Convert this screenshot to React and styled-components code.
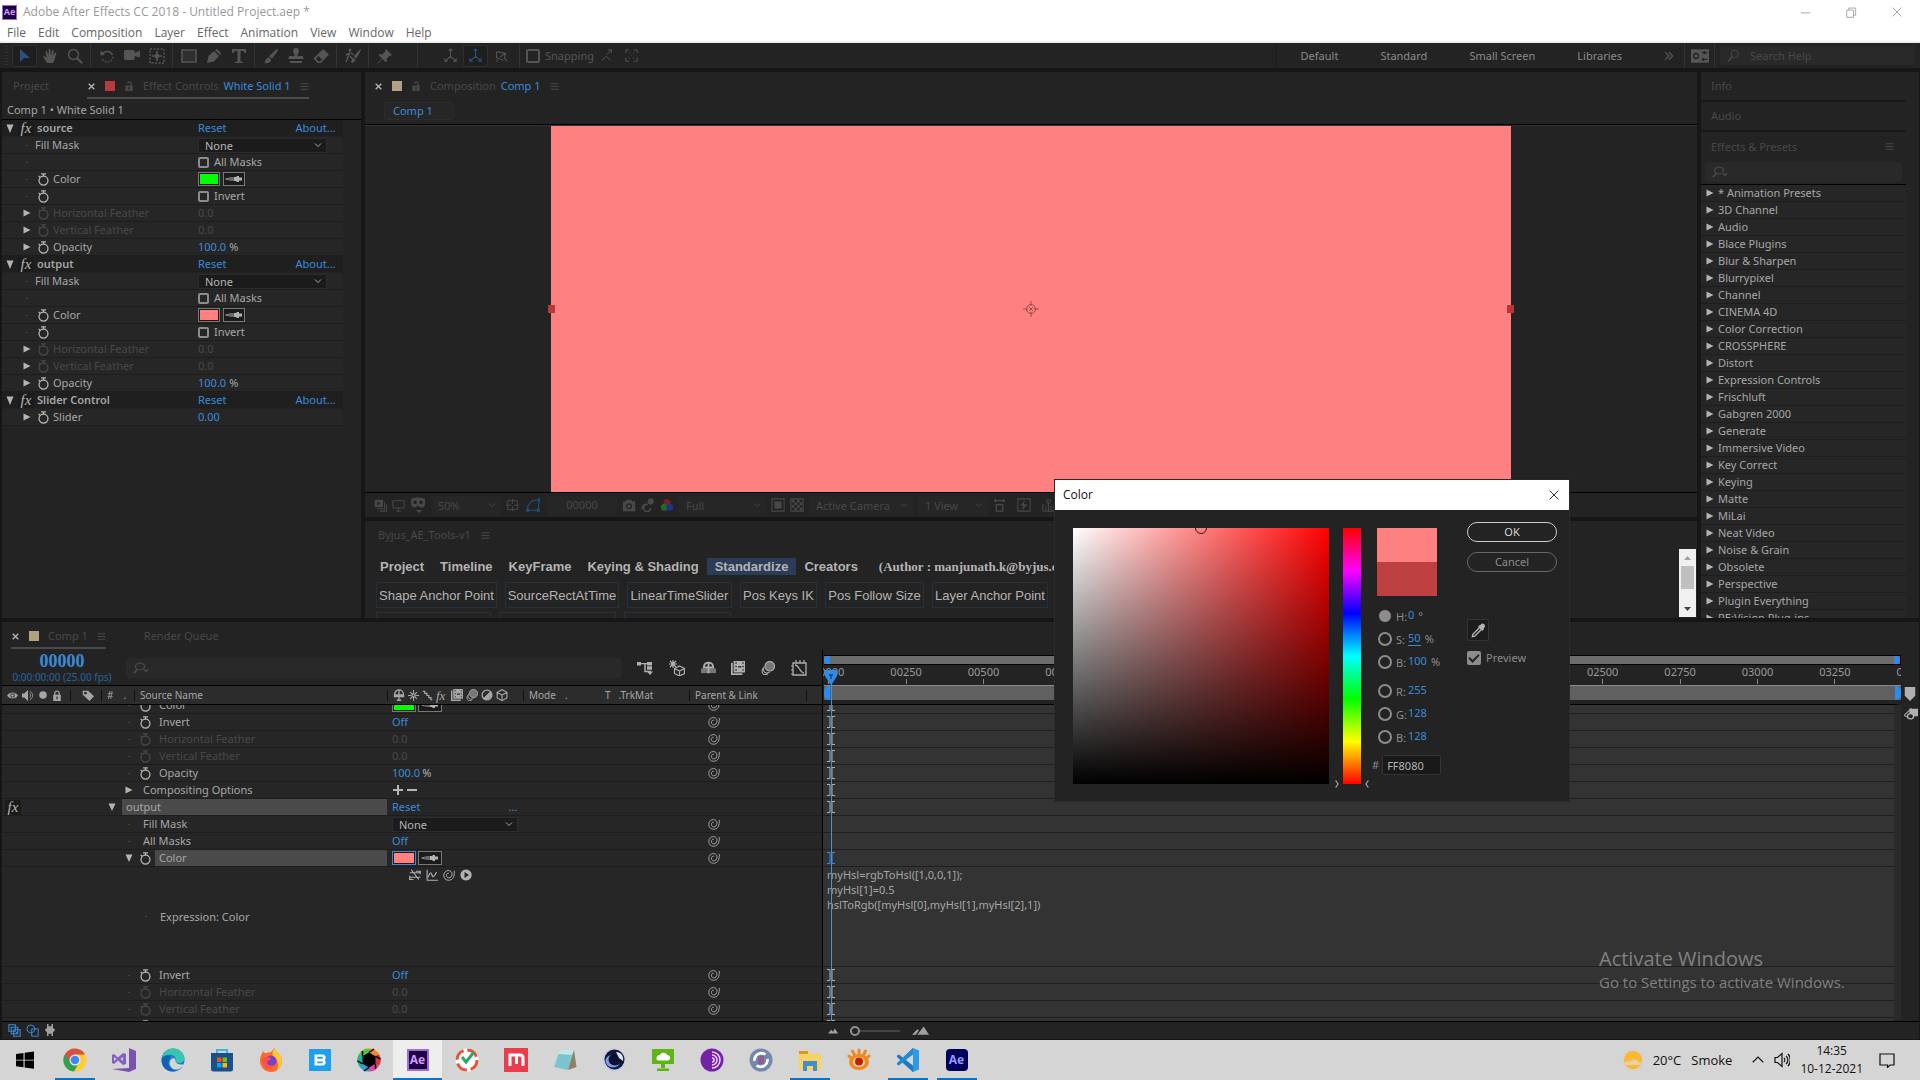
import React from "react";
import styled, { createGlobalStyle, css } from "styled-components";

const ui = `"Noto Sans", "Open Sans", sans-serif`;
const win = `"Open Sans", "Noto Sans", sans-serif`;
const C = {
  panel: "#232323",
  row: "#262626",
  gap: "#161616",
  line: "#1d1d1d",
  text: "#a6a6a6",
  dim: "#484848",
  blue: "#3b8ad8",
  salmon: "#ff8080",
};

const Global = createGlobalStyle`
  * { box-sizing: border-box; }
  body { margin: 0; background: ${C.gap}; color: ${C.text}; font: 11px/16px ${ui}; overflow: hidden; }
  button, input, select, textarea { font: inherit; color: inherit; margin: 0; padding: 0; border: 0; background: none; border-radius: 0; outline: none; text-align: left; }
  svg { display: block; flex: none; }
`;

/* ---------- icons ---------- */
const G = {
  arrow: <path d="M3 1v13l4-4h6z" fill="currentColor" stroke="none" />,
  hand: <path d="M5 15 1.5 9.5c-.8-1.4.6-2 1.5-1l1.6 1.6L3.6 4c-.2-1.300 1.200-1.600 1.600-.3l1.200 4L6.700 1.800c0-1.300 1.600-1.300 1.700 0l.4 5.700 1.300-5c.4-1.200 1.800-.8 1.600.4L10.900 8l1.900-3c.7-1 2-.3 1.500.8-1 2.200-1.300 6-3.300 9.200z" fill="currentColor" stroke="none" />,
  mag: <><circle cx="6.500" cy="6.500" r="5" /><path d="m10.200 10.200 5 5" strokeWidth="2" /></>,
  magL: <><circle cx="9.500" cy="6" r="4.500" /><path d="M6.300 9.500 1.500 15" strokeWidth="2" /></>,
  magDrop: <><circle cx="7" cy="6" r="4.500" strokeWidth="1.400" /><path d="M4.500 9.500 1 15" strokeWidth="2" /><path d="M10 10h6l-3 4z" fill="currentColor" stroke="none" /></>,
  rotate: <><path d="M3.500 5.500A6 6 0 0 1 13.500 7" /><path d="M1.500 2.500v4.700h4.700z" fill="currentColor" stroke="none" /><path d="M14 9a6 6 0 0 1-11.500 1" strokeDasharray="1.500 1.500" /></>,
  camera: <path d="M0 4c0-1.500.6-2 2-2h7c1.400 0 1.700.8 1.700 2v1L16 2.500v7L10.700 8v2c0 1.300-.6 2-1.700 2H2c-1.400 0-2-.7-2-2z" fill="currentColor" stroke="none" />,
  pan: <><rect x="1" y="1" width="14" height="14" strokeDasharray="2 1.500" /><circle cx="8" cy="8" r="1.500" fill="currentColor" /><path d="M8 3v3M8 10v3M3 8h3M10 8h3" strokeWidth="1.600" /></>,
  rect: <rect x="1" y="2" width="14" height="12" fill="#2e2e2e" />,
  pen: <path d="m1 15 1.500-7L8 3l5 5-5 5.500zM9 2l2-1 4 4-1 2z" fill="currentColor" stroke="none" />,
  type: <path d="M1 1h14v4h-1.500L12.500 3H9.500v10.500L12 14v1H4v-1l2.500-.5V3h-3L2.500 5H1z" fill="currentColor" stroke="none" />,
  brush: <path d="M15 1c1 1-4 7-6 9.500L6 8.500C8 6 14 0 15 1zM5.500 9.500 8 11.500C8 15 4 15.500 1 15c2-1 1.500-5.500 4.500-5.500z" fill="currentColor" stroke="none" />,
  stamp: <path d="M8 0c2 0 3 1.500 3 3S9.500 6 9.500 8H14c1.500 0 1.500 3 1.500 3H.5S.5 8 2 8h4.500C6.500 6 5 4.500 5 3s1-3 3-3zM2 13h12v2H2z" fill="currentColor" stroke="none" />,
  eraser: <path d="M10 1 16 6.500 8 15H4.500L.5 10.500zM3 10.500l2.500 3H7l2-2-3.500-3.500z" fill="currentColor" stroke="none" fillRule="evenodd" />,
  roto: <><circle cx="5" cy="2" r="1.500" fill="currentColor" stroke="none" /><path d="M5 4 3 9l-2 5M5 8l2.500 3v4M5 5 1 7M6 5l3 2" /><path d="M16 1C14 2 10 6 9 9l2 1.500C13 8 16 3 16 1zM8.500 10c-1.500.5-1 3-3 4 3 .500 5-.5 5-2.500z" fill="currentColor" stroke="none" /></>,
  pin: <path d="m9 1 6 6-1.500 1-1-.3L9.500 11l.5 2.500-1 1L5.500 11 1 15.500.5 15 5 10.500 1.500 7l1-1 2.500.5L8.300 3.500 8 2z" fill="currentColor" stroke="none" />,
  axes: <path d="M8 1v8L2 14M8 9l6 5M6 3l2-2 2 2M2 11v3h3M14 11v3h-3" />,
  axesView: <path d="m3 15 1-3M3 3l10 2-1 5 3 4M3 3v7l8 3M13 5 7 9" />,
  snapA: <path d="m2 14 6-5 5 5M8 7l6-6M10 1h4v4" />,
  dotsBox: <path d="M1 5V1h4M11 1h4v4M15 11v4h-4M5 15H1v-4M5 5h1M10 5h1M8 8h.5M5 11h1M10 11h1" />,
  lock: <path d="M2 7h8.500V4.500c0-2-3.500-2-3.500-.5H5c0-5 7.500-4.500 7.500.5V7H14v9H2zm5 2.500v4h2v-4z" fill="currentColor" fillRule="evenodd" stroke="none" />,
  lockC: <path d="M2 7h1.500V4.500C3.500-.5 12.500-.5 12.500 4.500V7H14v9H2zm3.500 0h5V4.500c0-2.500-5-2.500-5 0zM7 9.500v4h2v-4z" fill="currentColor" fillRule="evenodd" stroke="none" />,
  menu: <path d="M1 3h14M1 8h14M1 13h14" strokeWidth="1.800" />,
  x: <path d="m3 3 10 10M13 3 3 13" strokeWidth="2.400" />,
  thinx: <path d="m1 1 14 14M15 1 1 15" strokeWidth="1.400" />,
  watch: <><circle cx="8" cy="9.300" r="5.500" strokeWidth="1.600" /><path d="M5 1h6M8 1v3M2 3.500l2 2" strokeWidth="1.600" /></>,
  whip: <path d="M15 2.500v3c0 6-3 9.500-7.500 9.500C3.500 15 1 12.200 1 8.500 1 4.500 4 2 7.300 2c2.700 0 4.700 2 4.700 5 0 3-2 4.800-4.300 4.800S4.500 10 4.500 8.300 6 5.500 7.800 5.500" strokeWidth="1.300" />,
  triR: <path d="M1 1v14l14-7z" fill="currentColor" stroke="none" />,
  triD: <path d="M1 1h14L8 16z" fill="currentColor" stroke="none" />,
  chev: <path d="m2 5 6 6 6-6" strokeWidth="1.800" />,
  chevUp: <path d="m1 11 7-7 7 7" strokeWidth="1.500" />,
  more: <path d="m2 2 6 6-6 6M8 2l6 6-6 6" strokeWidth="2" />,
  settings: <><rect x="0" y="2" width="16" height="12" fill="currentColor" stroke="none" /><path d="M9.500 5h5M9.500 11h5M12 3.500v3M11 9.500v3" stroke="#232323" /><circle cx="4.500" cy="8" r="2.200" stroke="#232323" /></>,
  eye: <path d="M.5 8C3 3 13 3 15.500 8 13 13 3 13 .5 8zM8 4.500a3.500 3.500 0 1 0 .1 0zM8 6.500a1.500 1.500 0 1 1-.1 0z" fill="currentColor" fillRule="evenodd" strokeWidth=".8" />,
  speaker: <><path d="M0 5h3l5-5v16l-5-5H0z" fill="currentColor" stroke="none" /><path d="M10 5c2 1.500 2 4.500 0 6M10.500 2c5 3 5 9 0 12" /></>,
  dot: <circle cx="8" cy="8" r="6" fill="currentColor" stroke="none" />,
  tag: <path d="M1 1h7l8 8-6 7-9-9zM4.500 2.500a2 2 0 1 0 .1 0z" fill="currentColor" fillRule="evenodd" stroke="none" />,
  shy: <path d="M2 8c0-9 12-9 12 0zM1 10h14M8 1v14M5 15h6" strokeWidth="1.800" />,
  sun: <path d="M8 0v5M8 11v5M0 8h5M11 8h5M3 3l3 3M10 10l3 3M13 3l-3 3M6 10l-3 3M6 6h4v4H6z" strokeWidth="1.500" />,
  slash: <path d="M1 2h3v3h3v3h3v3h3v3h2" strokeWidth="1.800" />,
  film: <path d="M0 2h2v12h11v2H0zM3 0h13v13H3zm2 1.500v1.500h1.500V1.500zm0 4V7h1.500V5.500zm0 4V11h1.500V9.500zm8-8V3h1.500V1.500zm0 4V7h1.500V5.500zm0 4V11h1.500V9.500zM8 6v1.500h4V6z" fill="currentColor" fillRule="evenodd" stroke="none" />,
  blur: <><circle cx="10" cy="6" r="5.500" fill="#777" /><path d="M3.500 6.500C1 13 6 15 10 12.500M2 8.500C-.5 14.500 4 17 8 14.500" /></>,
  adj: <><circle cx="8" cy="8" r="6.500" strokeWidth="1.800" /><path d="M12.500 3.500a6.500 6.500 0 0 1-9 9z" fill="currentColor" /></>,
  cube: <path d="m8 1 6.500 3.500v7.500L8 15.500 1.500 12V4.500zM1.500 4.500 8 8l6.500-3.500M8 8v7.500" strokeWidth="1.500" />,
  flow: <><path d="M0 3h15M8 3v9h6" strokeWidth="1.500" /><path d="M0 1h4v4H0zM10 1h5v4h-5zM10 6h5v4h-5zM10 12h6l-3 4z" fill="currentColor" stroke="none" /></>,
  draft: <><path d="m10.500 6 5 2.500v5l-5 2.500-5-2.500v-5zM5.500 8.500l5 2.500 5-2.500M10.500 11v5" /><path d="M4 0v8M0 4h8M1 1l6 6M7 1 1 7" /></>,
  shyBig: <><path d="M0 9h16v5H0z" fill="#777" stroke="none" /><path d="M3 8c0-7 10-7 10 0zM8 3v11" strokeWidth="2" /></>,
  graph: <><path d="M2 3h13v12H2zM4 5c4 0 5 8 9 8" strokeWidth="1.300" /><path d="M5 0v3M9 0v3M13 0v3M0 6h2M0 10h2M0 14h2" /></>,
  exprOff: <path d="M1 5h14M1 11h14M3 1l10 13M9 3h6v4M1 9v5h5" strokeWidth="1.600" />,
  exprGraph: <path d="M1.500 1v14H16M3 11c2-7 4-7 5-3s3 3 6-4" strokeWidth="1.500" />,
  exprPlay: <path d="M8 .5a7.500 7.500 0 1 0 .1 0zM6 4l6 4-6 4z" fill="currentColor" fillRule="evenodd" stroke="none" />,
  squares: <path d="M1 1h8v8H1zM4 4h8v8H4zM7 7h8v8H7zM11 9.500v3M9.500 11h3" strokeWidth="1.300" />,
  circSq: <><circle cx="6" cy="6" r="4.800" /><path d="M7 6h8v9H7z" /></>,
  brackets: <path d="M4 0h2v16H4v-5L1 8l3-3zM12 0h-2v16h2v-5l3-3-3-3zM6 3h4v10H6z" fill="currentColor" stroke="none" />,
  mtn: <path d="m0 12 5-6 3 3 3-5 5 8z" fill="currentColor" stroke="none" />,
  mtn2: <path d="m0 14 5-8 1.500 2L3.500 14zM5 14 11 2l5 12z" fill="currentColor" stroke="none" />,
  marker: <path d="M1 0h14v10l-7 6-7-6z" fill="currentColor" stroke="none" />,
  compBtn: <><path d="M6 1h10v10H6z" fill="currentColor" stroke="none" /><path d="m0 10 8-9v13z" /><circle cx="7.500" cy="11" r="3.500" fill="#232323" strokeWidth="1.600" /></>,
  layers: <><path d="M1 1h10v9H1z" fill="currentColor" stroke="none" /><path d="M13 4v8H4M15.500 7v8H7" strokeWidth="1.400" /><path d="m4 3 4 2.500L4 8z" fill="#232323" stroke="none" /></>,
  monitor: <path d="M1 2h14v9H1zM8 11v4M5 15h6" />,
  mask: <path d="M1 2c4-2 10-2 14 0v5c0 4-5 5-7 1-2 4-7 3-7-1zM5 3.500a1.800 1.800 0 1 0 .1 0zM11 3.500a1.800 1.800 0 1 0 .1 0zM6 13h6l-3 3z" fill="currentColor" fillRule="evenodd" stroke="none" />,
  grid: <path d="M2 2h12v11H2zM8 0v6M8 9v6M0 7.500h6M10 7.500h6" />,
  path: <path d="M2 14V9l5-6 8-1-1 12zM1 13h2v2H1zM13 13h2v2h-2zM14 1h2v2h-2z" />,
  photo: <path d="M1 4h3l1.500-2h5L12 4h3v11H1zm7 2a3.500 3.500 0 1 0 .1 0zm0 1.500a2 2 0 1 1-.1 0z" fill="currentColor" fillRule="evenodd" stroke="none" />,
  person: <><circle cx="11" cy="4" r="3" fill="currentColor" /><path d="M8 7.500a4 4 0 1 0 3 4M1 13c0-4 2-6 6-6" strokeWidth="1.800" /></>,
  rgb: <g stroke="none"><circle cx="8" cy="5" r="4" fill="#7a2020" /><circle cx="5" cy="10.500" r="4" fill="#1f6a25" /><circle cx="11" cy="10.500" r="4" fill="#22308a" /></g>,
  safe: <><path d="M1 1h14v14H1z" /><path d="M4.500 4.500h7v7h-7z" fill="currentColor" /></>,
  checker: <><path d="M1 1h14v14H1z" /><path d="M2 2h3v3H2zM8 2h3v3H8zM5 5h3v3H5zM11 5h3v3h-3zM2 8h3v3H2zM8 8h3v3H8zM5 11h3v3H5zM11 11h3v3h-3z" fill="currentColor" stroke="none" /></>,
  par: <path d="M1 2h14M3 0v4M13 0v4M4 7h8v8H4z" strokeWidth="1.600" />,
  fast: <><path d="M1 1h14v14H1z" /><path d="m9 2-5 7h3l-1 5 6-7H8z" fill="currentColor" stroke="none" /></>,
  tl: <path d="M1 6v9h14V6M5 15V8M11 15V8M8 15V4M6 1h4v4H6z" />,
  dropper: <><path d="m10 2 1-1c2-1.500 5 1 3.500 3.500l-1 1 .5 1-2 2L7.500 4l2-2z" fill="currentColor" stroke="none" /><path d="m9 5-7 7-.5 2.500L4 14l7-7" strokeWidth="1.500" /></>,
  min: <path d="M1 8.500h14" />,
  restore: <path d="M1 4.500h10V15H1zM4 4V1.500h10V12h-3" />,
  note: <path d="M1 2h14v11h-4l-2.500 2.500V13H1z" />,
  vol: <path d="M1 5.500h2.500L8 1.500v13l-4.500-4H1zM10 6c1 1 1 3 0 4M12 4c2.500 2 2.500 6 0 8M14 2c3 3 3 9 0 12" />,
  hueL: <path d="m2 1 8 7-8 7" strokeWidth="3" />,
  hueR: <path d="m14 1-8 7 8 7" strokeWidth="3" />,
};
const Icon = ({ n, s = 12, w, sw = 1.2 }) => (
  <svg width={w || s} height={s} viewBox="0 0 16 16" preserveAspectRatio="none" fill="none" stroke="currentColor" strokeWidth={sw} aria-hidden="true">{G[n]}</svg>
);
const Dropper = () => (
  <svg width="18" height="8" viewBox="0 0 18 8" aria-hidden="true">
    <path d="M0 4c2-1.500 5-1.500 9-1.500V2h2.500V1H14v1.500h3v3h-3V7h-2.500V6H9v-.5C5 5.500 2 5.500 0 4z" fill="#b4b4b4" />
    <path d="M2.500 4H9" stroke="#1b1b1b" />
  </svg>
);

/* ---------- shared parts ---------- */
const Shell = styled.div`display: flex; flex-direction: column; height: 100vh; min-height: 900px;`;
const Panel = styled.section`background: ${C.panel}; min-width: 0; min-height: 0; display: flex; flex-direction: column; overflow: hidden;`;
const Btn = styled.button`display: inline-flex; align-items: center; gap: 5px; white-space: nowrap; color: ${(p) => p.$c || "inherit"};`;
const Link = styled.button`color: ${C.blue}; white-space: nowrap;`;
const Chip = styled.span`width: 10px; height: 10px; background: ${(p) => p.$c};`;
const Blue = styled.span`color: ${C.blue};`;
const Fx = styled.span`font: italic 15px/15px "Liberation Serif", serif; color: #b4b4b4; width: 16px; text-align: center; background: #1b1b1b;`;
const Selector = styled.label`
  display: grid; align-items: center; width: ${(p) => p.$w}px; height: ${(p) => p.$h || 15}px; background: ${(p) => p.$bg || "#1b1b1b"};
  border: 1px solid ${(p) => p.$bd || "#2c2c2c"}; color: ${(p) => p.$c || "#b4b4b4"};
  > * { grid-area: 1 / 1; }
  > svg { justify-self: end; margin-right: 4px; }
`;
const Native = styled.select`appearance: none; width: 100%; padding-left: 6px; line-height: 13px;`;
const Select = ({ value, label, ...p }) => (
  <Selector {...p}><Native aria-label={label} defaultValue={value}><option>{value}</option></Native><Icon n="chev" s={8} /></Selector>
);
const FootSelect = (p) => <Select $h={19} $bg="#262626" $bd="#262626" $c={C.dim} {...p} />;
const Tick = styled.input.attrs({ type: "checkbox" })`
  appearance: none; width: ${(p) => p.$s || 11}px; height: ${(p) => p.$s || 11}px; border: 2px solid ${(p) => p.$c || "#8c8c8c"}; border-radius: 2px; flex: none;
`;
const TickLabel = styled.label`display: inline-flex; align-items: center; gap: 5px;`;
const Gap = styled.span`flex: none; width: ${(p) => p.$w}px;`;
const Tint = styled.span`color: ${(p) => p.$c}; padding: ${(p) => p.$p || 0}px;`;

/* ---------- window chrome ---------- */
const TitleBar = styled.header`background: #fff; height: 43px; flex: none; border-bottom: 2px solid #eef0ee; font: 12px/20px ${win}; color: #999;`;
const TitleRow = styled.div`display: flex; align-items: center; height: 24px; padding-left: 2px; gap: 6px;`;
const Badge = styled.span`width: 15px; height: 15px; background: #22003d; border: 1px solid #9a6bd0; color: #c79bff; font: bold 9px/12px ${ui}; text-align: center;`;
const WinBtns = styled.div`margin-left: auto; display: flex; button { width: 46px; justify-content: center; height: 20px; }`;
const Menus = styled.nav`display: flex; height: 17px; padding-left: 7px; gap: 12px; line-height: 17px; color: #666;`;

const ToolBar = styled.div`background: ${C.panel}; height: 25px; flex: none; display: flex; align-items: center; padding: 0 5px; color: #555; margin-bottom: 4px;`;
const Grip = styled.span`width: 7px; height: 19px; background: repeating-linear-gradient(#333 0 1px, transparent 1px 3px); background-size: 3px 100%; background-repeat: no-repeat;`;
const Tool = styled.button`
  width: 25px; height: 22px; display: flex; align-items: center; justify-content: center; border-radius: 2px;
  ${(p) => p.$on && css`background: #1e1e1e; border: 1px solid #2e2e2e; color: #2b527c;`}
`;
const Sep = styled.span`width: 1px; height: 25px; margin: 0 ${(p) => p.$m ?? 3}px; background: #333; flex: none;`;
const Spaces = styled.nav`margin-left: auto; display: flex; align-items: center; color: #8a8a8a; gap: 42px; padding: 0 4px 0 24px; border-left: 1px solid #1b1b1b; height: 25px;`;
const SearchBox = styled.label`display: flex; align-items: center; gap: 10px; background: #292929; border-radius: 3px; color: #484848; height: ${(p) => p.$h || 19}px; padding: 0 7px; ${(p) => p.$w && `width: ${p.$w}px;`} input { flex: 1; min-width: 0; } input::placeholder { color: #484848; opacity: 1; }`;

/* ---------- upper workspace ---------- */
const Work = styled.main`flex: 1; min-height: 0; display: flex; flex-direction: column; gap: 4px;`;
const Upper = styled.div`flex: 547 1 0; min-height: 0; display: grid; grid-template-columns: 359px minmax(0, 1fr) 218px; gap: 4px; padding: 0 1px 0 2px;`;
const Middle = styled.div`display: flex; flex-direction: column; gap: 4px; min-height: 0; min-width: 0;`;
const Tabs = styled.div`display: flex; align-items: center; height: 28px; flex: none; padding-left: ${(p) => p.$l}px; gap: ${(p) => p.$g || 0}px; color: ${C.dim};`;
const ActiveTab = styled.div`display: flex; align-items: center; gap: ${(p) => p.$g || 9}px; height: 26px; padding-top: ${(p) => (p.$u ? 2 : 0)}px; ${(p) => p.$u && "border-bottom: 2px solid #4a4a4a;"}`;
const Crumb = styled.div`height: 20px; line-height: 20px; padding-left: 5px; border-bottom: 1px solid #000; flex: none;`;

const FxRow = styled.div`
  display: flex; align-items: center; height: 17px; width: 341px; background: ${(p) => (p.$head ? "#1f1f1f" : C.row)};
  border-bottom: 1px solid ${(p) => (p.$head ? "#222" : C.line)}; color: ${(p) => (p.$off ? C.dim : C.text)};
`;
const FxName = styled.div`display: flex; align-items: center; width: 196px; padding-left: ${(p) => (p.$in ? 17 : 0)}px;`;
const FxTitle = styled.span`font-weight: 600; margin-left: 3px;`;
const FxText = styled.span`margin-left: ${(p) => (p.$w ? 2 : 0)}px;`;
const Slot = styled.span`width: ${(p) => p.$w || 16}px; display: flex; justify-content: center; flex: none; color: ${(p) => p.$c || "inherit"};`;
const Speck = styled.span`width: 2px; height: 1px; background: #444;`;
const Value = styled.div`display: flex; align-items: center; flex: 1; gap: ${(p) => p.$g ?? 3}px;`;
const Swatch = styled.button`width: ${(p) => p.$w || 22}px; height: 14px; background: ${(p) => p.$fill}; border: 1px solid ${(p) => p.$bd || "#777"}; box-shadow: inset 0 0 0 1px #1b1b1b;`;
const DropBtn = styled.button`width: ${(p) => p.$w || 22}px; height: 14px; border: 1px solid #777; background: #1b1b1b; display: flex; align-items: center; justify-content: center;`;

const Effect = ({ name, children }) => (
  <>
    <FxRow $head>
      <FxName><Slot $c="#b4b4b4"><Icon n="triD" s={9} w={8} /></Slot><Fx>fx</Fx><FxTitle>{name}</FxTitle></FxName>
      <Value $g={69}><Link>Reset</Link><Link>About...</Link></Value>
    </FxRow>
    {children}
  </>
);
const Prop = ({ name, tri, watch = true, off, children }) => (
  <FxRow $off={off}>
    <FxName $in>
      <Slot $c="#b4b4b4">{tri ? <Icon n="triR" s={8} /> : <Speck />}</Slot>
      {watch && <Slot $c={off ? "#484848" : "#b4b4b4"}><Icon n="watch" s={13} /></Slot>}
      <FxText $w={watch}>{name}</FxText>
    </FxName>
    <Value>{children}</Value>
  </FxRow>
);

const ChromaProps = ({ color }) => (
  <>
    <Prop name="Fill Mask" watch={false}><Select $w={129} value="None" label="Fill Mask" /></Prop>
    <Prop name="" watch={false}><TickLabel><Tick />All Masks</TickLabel></Prop>
    <Prop name="Color"><Swatch $fill={color} aria-label="Color" /><DropBtn aria-label="Pick color"><Dropper /></DropBtn></Prop>
    <Prop name=""><TickLabel><Tick />Invert</TickLabel></Prop>
    <Prop name="Horizontal Feather" tri off>0.0</Prop>
    <Prop name="Vertical Feather" tri off>0.0</Prop>
    <Prop name="Opacity" tri><Link>100.0</Link>%</Prop>
  </>
);

const CompPanel = styled(Panel)`flex: 1;`;
const CompHead = styled.div`height: 25px; flex: none; border-bottom: 1px solid #000; padding: 2px 19px 0;`;
const CompTab = styled.button`width: 70px; height: 18px; background: #262626; border: 1px solid #2c2c2c; border-radius: 2px; color: ${C.blue}; padding-left: 8px; display: block;`;
const Viewport = styled.div`flex: 1; min-height: 0; display: flex; justify-content: center; border-bottom: 1px solid #000; border-top: 1px solid #333;`;
const Frame = styled.div`flex: 0 0 72%; background: ${C.salmon}; position: relative; display: grid; place-items: center; color: #9a4a4a;`;
const Handle = styled.span`position: absolute; top: calc(50% - 4px); ${(p) => p.$side}: -3px; width: 7px; height: 8px; background: #b83838;`;
const CompFoot = styled.div`height: 24px; flex: none; display: flex; align-items: center; gap: 5px; padding-left: 9px; color: #484848; white-space: nowrap;`;
const TimeBox = styled.button`width: 70px; height: 19px; background: #262626; text-align: center;`;

const ToolsPanel = styled(Panel)`height: 97px; flex: none;`;
const ToolsBody = styled.div`flex: 1; display: flex; min-height: 0; margin-right: 1px;`;
const ToolsMain = styled.div`flex: 1; min-width: 0; padding: 9px 11px 0; font-family: "Liberation Sans", Arial, sans-serif; overflow: hidden;`;
const CatRow = styled.div`display: flex; align-items: center; font-weight: bold; font-size: 13px; line-height: 17px; color: #b4b4b4; white-space: nowrap;`;
const Cat = styled.button`font-weight: bold; padding: 0 8px; margin-left: ${(p) => (p.$first ? -4 : 0)}px; ${(p) => p.$on && "background: #2a3c58;"}`;
const Author = styled.span`font-family: "Liberation Serif", serif; margin-left: 13px;`;
const ActRow = styled.div`display: flex; gap: 8px; margin-top: ${(p) => p.$t}px; font-size: 13px; line-height: 15px; color: #b4b4b4;`;
const Act = styled.button`height: 26px; border: 1px solid #24303c; text-align: center; white-space: nowrap; flex: none; width: ${(p) => p.$w}px;`;
const Scroll = styled.div`width: 17px; height: 68px; background: #f0f0f0; display: flex; flex-direction: column; align-items: center; justify-content: space-between; color: #8a8a8a;`;
const ScrollBtn = styled.button`height: 17px; width: 17px; display: grid; place-items: center; color: ${(p) => p.$c};`;
const Thumb = styled.span`width: 13px; height: 23px; background: #c0c0c0; margin-bottom: 11px;`;

const SideHead = styled.div`height: ${(p) => (p.$b ? 30 : 29)}px; flex: none; padding: 0 12px 0 10px; display: flex; align-items: center; justify-content: space-between; color: ${C.dim}; margin-right: 13px; ${(p) => p.$b && "border-bottom: 2px solid #181818;"}`;
const SideSearch = styled.div`margin: 0 13px 0 0; padding: 1px 4px 2px; border-bottom: 1px solid #000; flex: none;`;
const FxList = styled.ul`list-style: none; margin: 0 13px 0 0; padding: 0; min-height: 0; overflow: hidden;`;
const FxItem = styled.li`height: 17px; background: ${C.row}; border-bottom: 1px solid ${C.line}; display: flex; align-items: center; gap: 4px; padding-left: 5px; color: #b4b4b4; white-space: nowrap;`;
const FxItemText = styled.button`color: ${C.text};`;

/* ---------- timeline ---------- */
const Time = styled(Panel)`flex: 417 1 0; margin: 0 1px 0 2px; border-bottom: 1px solid #161616;`;
const TimeCols = styled.div`flex: 1; min-height: 0; display: grid; grid-template-columns: 821px minmax(0, 1fr) 18px;`;
const Left = styled.div`display: flex; flex-direction: column; min-height: 0; border-right: 1px solid #000;`;
const Top = styled.div`height: 35px; flex: none; display: flex; align-items: center; padding-left: 8px;`;
const Clock = styled.div`width: 104px; text-align: center; color: #2463a0; font-size: 10px; line-height: 14px; padding-top: 1px; white-space: nowrap;`;
const Frames = styled.button`font: bold 18px/18px "Liberation Serif", serif; color: ${C.blue}; display: block; margin: 0 auto;`;
const SwitchRow = styled.div`display: flex; align-items: center; flex: 1; justify-content: space-between; padding: 0 15px 0 16px; color: #b0b0b0;`;
const Heads = styled.div`height: 20px; flex: none; display: flex; align-items: center; background: #2c2c2c; border-top: 1px solid #000; border-bottom: 1px solid #000; color: ${C.text}; font-size: 10px;`;
const Head = styled.div`width: ${(p) => p.$w}px; height: 11px; flex: none; display: flex; align-items: center; gap: ${(p) => p.$g || 4}px; padding-left: 5px; ${(p) => p.$b && "border-left: 1px solid #111;"}`;
const SmallFx = styled.span`font: italic 13px/11px "Liberation Serif", serif; width: 12px;`;
const Clip = styled.div`flex: 1; min-height: 0; overflow: hidden;`;
const Rows = styled.div`margin-top: -8px;`;
const TRow = styled.div`display: flex; align-items: center; height: ${(p) => p.$h || 17}px; background: ${C.row}; border-bottom: 1px solid ${C.line}; color: ${(p) => (p.$off ? C.dim : C.text)}; ${(p) => p.$h && "align-items: stretch;"}`;
const TName = styled.div`width: 390px; flex: none; display: flex; align-items: center; height: 100%; padding-right: 5px;`;
const Indent = styled.span`width: ${(p) => p.$w}px; flex: none; padding-left: 3px; display: flex;`;
const TLabel = styled.span`flex: 1; margin-left: 2px; padding-left: 4px; height: 100%; line-height: 16px; display: flex; align-items: center; ${(p) => p.$sel && "background: #4a4a4a;"}`;
const TVal = styled.div`width: 316px; flex: none; display: flex; align-items: ${(p) => (p.$top ? "flex-start" : "center")}; gap: ${(p) => (p.$top ? 5 : 2)}px; padding: ${(p) => (p.$top ? "2px 0 0 17px" : 0)}; color: ${(p) => (p.$off ? C.dim : "#b0b0b0")};`;
const Right = styled.div`display: flex; flex-direction: column; min-height: 0; min-width: 0; padding-top: 5px; position: relative;`;
const NavBar = styled.div`height: 10px; margin-left: 1px; flex: none; background: #6c6c6c; border: 1px solid #000; border-left: 0; display: flex; justify-content: space-between;`;
const Cap = styled.span`width: 6px; background: #2d8ceb; border-radius: ${(p) => (p.$end ? "0 5px 5px 0" : "5px 0 0 5px")};`;
const Ruler = styled.div`height: 20px; flex: none; overflow: hidden;`;
const Marks = styled.div`display: grid; grid-template-columns: repeat(15, 1fr); margin: 0 -50px 0 -33px; text-align: center; color: #9a9a9a; line-height: 14px; font-size: 11px;`;
const Mark = styled.div`display: flex; flex-direction: column; align-items: center; &::after { content: ""; width: 1px; height: 5px; background: #888; }`;
const WorkArea = styled.div`height: 15px; margin: 0 0 4px 1px; flex: none; background: #606060; border-top: 1px solid #888; display: flex; justify-content: space-between;`;
const TrackClip = styled.div`flex: 1; min-height: 0; overflow: hidden; border-top: 1px solid #000; border-right: 7px solid #2a2a2a;`;
const Track = styled.div`height: ${(p) => p.$h || 17}px; background: #333; border-bottom: 1px solid #1f1f1f; padding-left: 4px; display: flex; align-items: ${(p) => (p.$h ? "flex-start" : "center")}; color: ${(p) => p.$c || "#b0b0b0"};`;
const Code = styled.textarea`width: 280px; height: 96px; resize: none; color: #a6a6a6; line-height: 15px; overflow: hidden; display: block;`;
const Playhead = styled.div`position: absolute; top: 20px; bottom: 0; left: 2px; width: 12px; display: flex; flex-direction: column; align-items: center; pointer-events: none; &::after { content: ""; width: 1px; flex: 1; background: #4a90d9; }`;
const Gutter = styled.div`padding: 37px 0 0 3px; color: #b0b0b0; display: flex; flex-direction: column; gap: 7px;`;
const Foot = styled.div`height: 18px; flex: none; display: flex; align-items: center; border-top: 1px solid #000; padding-left: 6px; gap: 5px; color: #3b8ad8;`;
const FootSet = styled.div`width: 815px; display: flex; gap: 5px;`;
const Zoom = styled.input.attrs({ type: "range" })`
  appearance: none; width: 50px; height: 10px;
  &::-webkit-slider-runnable-track { height: 2px; background: #444; }
  &::-webkit-slider-thumb { appearance: none; width: 10px; height: 10px; margin-top: -4px; border: 2px solid #909090; border-radius: 50%; background: ${C.panel}; }
`;
const IBeam = () => (
  <svg width="8" height="12" viewBox="0 0 8 12" fill="none" stroke="currentColor" aria-hidden="true"><path d="M0 .500h3v11H0M8 .500H5v11h3" /></svg>
);
const Watermark = styled.div`position: absolute; right: 84px; bottom: 86px; width: 237px; color: #808080; font: 15px/24px ${win}; white-space: nowrap; pointer-events: none; strong { display: block; font-weight: 400; font-size: 20px; line-height: 22px; }`;

/* kind, name, options for every line of the layer outline */
const outline = [
  { n: "Color", watch: 1, kind: "color", fill: "#00ff00", whip: 1 },
  { n: "Invert", watch: 1, kind: "link", v: "Off", whip: 1 },
  { n: "Horizontal Feather", watch: 1, off: 1, v: "0.0", whip: 1 },
  { n: "Vertical Feather", watch: 1, off: 1, v: "0.0", whip: 1 },
  { n: "Opacity", watch: 1, kind: "pct", v: "100.0", whip: 1 },
  { n: "Compositing Options", tri: "triR", kind: "pm" },
  { n: "output", tri: "triD", kind: "reset", sel: 1, indent: 102, fx: 1 },
  { n: "Fill Mask", kind: "select", whip: 1, nokey: 1 },
  { n: "All Masks", kind: "link", v: "Off", whip: 1, nokey: 1 },
  { n: "Color", tri: "triD", watch: 1, kind: "color", fill: C.salmon, bd: "#3b8ad8", sel: 1, whip: 1, key: "#3b8ad8" },
  { n: "Expression: Color", indent: 136, kind: "expr", h: 100 },
  { n: "Invert", watch: 1, kind: "link", v: "Off", whip: 1 },
  { n: "Horizontal Feather", watch: 1, off: 1, v: "0.0", whip: 1 },
  { n: "Vertical Feather", watch: 1, off: 1, v: "0.0", whip: 1 },
  { n: "Opacity", watch: 1, kind: "pct", v: "100.0", whip: 1 },
];
const RowValue = ({ r }) => {
  switch (r.kind) {
    case "color": return <><Swatch $w={24} $fill={r.fill} $bd={r.bd} aria-label="Color" /><DropBtn $w={24} aria-label="Pick color"><Dropper /></DropBtn></>;
    case "link": return <Link>{r.v}</Link>;
    case "pct": return <><Link>{r.v}</Link>%</>;
    case "pm": return <svg width="26" height="12" viewBox="0 0 26 12" stroke="#b4b4b4" strokeWidth="2" aria-hidden="true"><path d="M1 6h10M6 1v10M15 6h10" /></svg>;
    case "reset": return <Value $g={88}><Link>Reset</Link><Link>...</Link></Value>;
    case "select": return <Select $w={126} value="None" label="Layer fill mask" />;
    case "expr": return <>{["exprOff", "exprGraph", "whip", "exprPlay"].map((n) => <Icon key={n} n={n} s={12} />)}</>;
    default: return r.v;
  }
};

/* ---------- color dialog ---------- */
const Dialog = styled.div`position: absolute; left: 54.95vw; top: 480px; width: 514px; background: ${C.panel}; color: #8c8c8c; box-shadow: 0 0 0 1px #2a2a2a;`;
const DlgTitle = styled.div`height: 30px; background: #fff; color: #111; font: 12px/30px ${win}; padding: 0 10px 0 8px; display: flex; justify-content: space-between; align-items: center;`;
const DlgBody = styled.div`display: grid; grid-template-columns: 256px 34px 84px 1fr; padding: 18px 12px 16px 18px; height: 291px;`;
const Field = styled.div`position: relative; overflow: hidden; height: 256px; background: linear-gradient(to top, #000, transparent), linear-gradient(to right, #fff, #f00);`;
const Ring = styled.span`position: absolute; left: 122px; top: -6px; width: 12px; height: 12px; border: 1px solid #222; border-radius: 50%;`;
const HueWrap = styled.div`display: flex; align-items: flex-end; height: 260px; padding-left: 6px; color: #aaa;`;
const Hue = styled.div`width: 18px; height: 256px; margin: 0 3px 4px; flex: none; background: linear-gradient(#f00, #f0f, #00f, #0ff, #0f0, #ff0, #f00);`;
const NumCol = styled.div`padding-left: 8px;`;
const Pair = styled.div`margin: 0 8px 0 6px; width: 60px; height: 68px; background: linear-gradient(#ff8080 50%, #bf4040 50%);`;
const Nums = styled.div`padding: ${(p) => p.$t}px 0 0 7px;`;
const Num = styled.div`display: flex; align-items: center; height: 23px; white-space: nowrap;`;
const Radio = styled.input.attrs({ type: "radio" })`appearance: none; width: 14px; height: 14px; border: 2px solid #8c8c8c; border-radius: 50%; margin-right: 4px; flex: none; &:checked { background: #8c8c8c; border-color: ${C.panel}; border-width: 1px; }`;
const NumLabel = styled.label`width: 12px; flex: none; padding-top: 2px;`;
const NumVal = styled.button`color: ${C.blue}; margin-right: 4px; line-height: 14px; border-bottom: 1px solid ${(p) => (p.$on ? "#3b8ad8" : "transparent")};`;
const Hex = styled.label`display: flex; align-items: center; gap: 3px; margin: 7px 0 0 1px; input { width: 59px; height: 20px; background: #191919; border: 1px solid #333; border-radius: 2px; padding-left: 4px; color: #b4b4b4; }`;
const DlgSide = styled.div`padding-left: 20px; margin-top: -6px; display: flex; flex-direction: column; align-items: flex-start;`;
const Pill = styled.button`width: 90px; height: 20px; text-align: center; border: 1px solid ${(p) => (p.$main ? "#ccc" : "#666")}; color: ${(p) => (p.$main ? "#d4d4d4" : "#8c8c8c")}; border-radius: 10px; margin-bottom: 10px; line-height: 16px;`;
const PickBtn = styled.button`width: 22px; height: 22px; margin: 37px 0 9px; background: #1c1c1c; border: 1px solid #333; display: grid; place-items: center; color: #b4b4b4;`;
const Check = styled.input.attrs({ type: "checkbox" })`appearance: none; width: 14px; height: 14px; border-radius: 2px; background: #8c8c8c; display: grid; place-items: center; &:checked::after { content: ""; width: 8px; height: 4px; border: solid #222; border-width: 0 0 2px 2px; transform: rotate(-45deg); margin-bottom: 2px; }`;

const numbers = [["H", "0", "°"], ["S", "50", "%"], ["B", "100", "%"]];
const rgb = [["R", "255"], ["G", "128"], ["B", "128"]];

/* ---------- taskbar ---------- */
const Task = styled.footer`height: 40px; flex: none; background: #d5d5d5; display: flex; align-items: stretch; color: #111; font: 12px/18px ${win};`;
const TaskBtn = styled.button`
  width: ${(p) => p.$w || 49}px; display: grid; place-items: center;
  ${(p) => p.$on && "background: #eee; box-shadow: inset 0 -2px #0a73c8;"}
  ${(p) => p.$open && "background: linear-gradient(#0a73c8, #0a73c8) bottom / 40px 2px no-repeat;"}
`;
const Tray = styled.div`margin-left: auto; display: flex; align-items: center; gap: 10px; padding-right: 25px; font-size: 13px; white-space: nowrap;`;
const DateBox = styled.time`font-size: 12px; text-align: center; line-height: 18px; margin-right: 6px;`;

const L = ({ children, s = 24 }) => <svg width={s} height={s} viewBox="0 0 24 24" aria-hidden="true">{children}</svg>;
const AeTile = styled.span`width: ${(p) => p.$s}px; height: ${(p) => p.$s}px; border-radius: ${(p) => p.$r || 0}px; background: ${(p) => p.$bg}; border: ${(p) => (p.$bd ? `2px solid ${p.$bd}` : 0)}; color: ${(p) => p.$c}; font: bold 12px/1 ${ui}; display: grid; place-items: center;`;
const apps = [
  ["Start", <L s={18}><path d="M0 4l10-1.500v9H0zM11.500 2.200 24 .5v11H11.500zM0 12.800h10v9L0 20.300zM11.500 12.800H24v11l-12.500-1.700z" /></L>],
  ["Chrome", <L><circle cx="12" cy="12" r="11.500" fill="#fc3" /><path d="M12 12 2 6a11.500 11.500 0 0 0 9 17.500l5-9z" fill="#2fa24f" /><path d="M2 6.300A11.500 11.500 0 0 1 22 6.500H12l-5 8z" fill="#d94f43" /><circle cx="12" cy="12" r="5.500" fill="#eee" /><circle cx="12" cy="12" r="4.300" fill="#4285f4" /></L>, "open"],
  ["Visual Studio", <L><path d="M17 0l7 3v18l-7 3L0 21l17-1z" fill="#7b52ab" /><path d="M0 7v8l2 1 4-3.500 5 4.500 3-1V6l-3-1-5 4.500L2 6zm2 2 2.500 2L2 13zm9 0v4l-2.500-2z" fill="#865fc5" fillRule="evenodd" /></L>],
  ["Edge", <L><circle cx="12" cy="12" r="11.500" fill="#1a7fd0" /><path d="M1 10C3-3 22-2 23.500 10c0 5-5 6-9 4 2-5-3-8-7-7C4 7.500 2 9 1 10z" fill="#36c6b0" /><path d="M14.500 14c3 3 6 3 8.500 2-2 5-9 8-13 3-3-4-1-8 2.500-9 2 1 2.500 2.500 2 4z" fill="#d5d5d5" /><path d="M8 12c-2 6 2 11 8 10.500C6 26-1 18 1 10c2-3 6-3.500 9-2-1 1-1.500 2-2 4z" fill="#1361b5" /></L>],
  ["Store", <L><path d="M7 6V2h10v4" fill="none" stroke="#3cb4e8" strokeWidth="2" /><path d="M1 5h22v16q0 2.500-2.500 2.500h-17Q1 23.500 1 21z" fill="#1b4f88" /><path d="M7 9.500h4.500V14H7z" fill="#f25022" /><path d="M12.500 9.500H17V14h-4.500z" fill="#7fba00" /><path d="M7 15h4.500v4.500H7z" fill="#00a4ef" /><path d="M12.500 15H17v4.500h-4.500z" fill="#ffb900" /></L>],
  ["Firefox", <L><path d="M12 4c2-2 2-3 3-4 1 3 8 6 8 13a11 11 0 0 1-22 0C1 8 3 6 4 3c1 2 2 2 3 2z" fill="#ff6a2b" /><path d="M15 0c1 3 8 6 8 13 0 4-2 7-5 9 2-5 1-10-2-12-2-1-4-3-1-10z" fill="#ffc833" /><circle cx="12" cy="13" r="5.500" fill="#7542c9" /><path d="M3 10c4-2 6 0 9 0-1 3-4 2-4 5 1 3 5 3 7 2-2 6-12 6-12-7z" fill="#ff4f4a" /></L>],
  ["Brackets", <L s={22}><path d="M0 0h24v24H0z" fill="#1ea0ee" /><path d="M6 6h10l2 2v3l-1 1 1 1v3l-2 2H6zm3 2.500v2h6v-2zm0 5v2h6v-2z" fill="#fff" fillRule="evenodd" /></L>],
  ["Aperture", <L><path d="M12 5V.5A11.500 11.500 0 0 1 22 6l-4 3z" fill="#f08a2c" /><path d="m18 8.500 4-2.500a11.500 11.500 0 0 1 0 12l-4-3z" fill="#e0343a" /><path d="m18 15 4 3a11.500 11.500 0 0 1-10 5.500V19z" fill="#e0479a" /><path d="M12 19v4.500A11.500 11.500 0 0 1 2 18l4-3z" fill="#2a9fd6" /><path d="M6 15.500 2 18A11.500 11.500 0 0 1 2 6l4 3z" fill="#1fb39a" /><path d="M6 9 2 6A11.500 11.500 0 0 1 12 .5V5z" fill="#55c62f" /><path d="m12 4.500 6.500 3.700v7.600L12 19.500l-6.500-3.700V8.200z" /><path d="M12 4.500 17 1M18.500 8.200l5 3M18.500 15.800l0 5M12 19.500 7 23M5.500 15.800l-5-3M5.500 8.200V3" stroke="#000" strokeWidth="1.500" /></L>],
  ["After Effects CC 2018", <AeTile $s={22} $bg="#1f0040" $bd="#9b6fd3" $c="#cf9bff">Ae</AeTile>, "on"],
  ["Timer", <L><circle cx="12" cy="12" r="11.500" fill="#fff" /><circle cx="12" cy="12" r="10" fill="none" stroke="#e4553c" strokeWidth="3" strokeDasharray="12 3.700" /><path d="m7 9 4 5 8-10" fill="none" stroke="#2fa56a" strokeWidth="3" /></L>],
  ["Mango", <L><path d="M0 0h24v24H0z" fill="#e93c4d" /><path d="M6 18V7h10q3 0 3 3v8M12.500 8v8" fill="none" stroke="#fff" strokeWidth="3" /></L>],
  ["Notepad", <L><path d="M7 2h14l-6 20L1 19z" fill="#78c4cf" /><path d="M7 2h14l-2 5L5 6z" fill="#c4e6ea" /><path d="m21 2 2.500 17L15 22z" fill="#8d8064" /></L>],
  ["Cinema 4D", <L><circle cx="12" cy="12" r="11.500" fill="#c9cdd8" /><circle cx="12.500" cy="11.500" r="10" fill="#0e1840" /><ellipse cx="11" cy="13" rx="7.500" ry="6.500" fill="#7f9be8" /><ellipse cx="13" cy="11.500" rx="6.500" ry="6" fill="#0a1030" /><path d="M14 4c5 0 8 4 7 9l-4-3z" fill="#dfe5fa" /></L>],
  ["Remote", <L><path d="M1 1h22v15H1zM10 16h4v4h-4zM6 20.500h12V23H6z" fill="#5fb516" /><path d="M6 12c-2-4 2-5 3-5 1-3 6-3 7 0 4 0 4 5 1 5.500H7z" fill="#fff" /></L>],
  ["Tor", <L><circle cx="12" cy="12" r="11.500" fill="#7421a8" /><path d="M12 4a8 8 0 0 1 0 16M12 7a5 5 0 0 1 0 10M12 10a2 2 0 0 1 0 4" fill="none" stroke="#f0d8ff" strokeWidth="1.500" /></L>],
  ["Sync", <L><circle cx="12" cy="12" r="11.500" fill="#7388ab" /><path d="M5.500 13a7 7 0 0 1 11-6.500M18.500 11a7 7 0 0 1-11 6.500" fill="none" stroke="#fff" strokeWidth="2.500" /><path d="M9 8h6v8H9z" fill="#8a5f96" /></L>],
  ["Explorer", <L><path d="M1 3h9l2 3h11v16H1z" fill="#f9d262" /><path d="M1 3h9v3H1z" fill="#d99b16" /><path d="M5 13h14v10h-4v-5H9v5H5z" fill="#3d8fd0" /></L>, "open"],
  ["XnView", <L><g fill="none" stroke="#f08a1c" strokeWidth="3" strokeLinecap="round"><path d="M12 8V2M8 8 5.500 3M16 8l2.500-5M5 11 2 8M19 11l3-3" /></g><ellipse cx="12" cy="14" rx="10" ry="8" fill="#f08a1c" /><ellipse cx="12" cy="14" rx="6" ry="5" fill="#fbd9a8" /><circle cx="12" cy="13.500" r="4" fill="#c31f0c" /></L>],
  ["VS Code", <L><path d="m17 0 6 2.500v19L17 24 4 12.500 17 0z" fill="#2b9be6" /><path d="M17 6.500v11L9.500 12z" fill="#d5d5d5" /><path d="m1 7.500 2-1 14 11.500v6L1 9z" fill="#1f78c1" /><path d="m1 16.500 2 1L17 6V0L1 15z" fill="#2489d0" /></L>, "open"],
  ["After Effects", <AeTile $s={22} $bg="#00005b" $r={4} $c="#9999ff">Ae</AeTile>, "open"],
];

const presets = ["* Animation Presets", "3D Channel", "Audio", "Blace Plugins", "Blur & Sharpen", "Blurrypixel", "Channel", "CINEMA 4D", "Color Correction", "CROSSPHERE", "Distort", "Expression Controls", "Frischluft", "Gabgren 2000", "Generate", "Immersive Video", "Key Correct", "Keying", "Matte", "MiLai", "Neat Video", "Noise & Grain", "Obsolete", "Perspective", "Plugin Everything", "RE:Vision Plug-ins"];
const marks = Array.from({ length: 15 }, (_, i) => String(i * 250).padStart(5, "0"));
const tools = [["arrow", "hand", "mag"], ["rotate", "camera", "pan"], ["rect", "pen", "type"], ["brush", "stamp", "eraser"], ["roto"], ["pin"]];

export default function App() {
  return (
    <Shell>
      <Global />
      <TitleBar>
        <TitleRow>
          <Badge>Ae</Badge>Adobe After Effects CC 2018 - Untitled Project.aep *
          <WinBtns>
            <Btn aria-label="Minimize"><Icon n="min" s={11} /></Btn>
            <Btn aria-label="Restore"><Icon n="restore" s={11} /></Btn>
            <Btn aria-label="Close"><Icon n="thinx" s={10} sw={1} /></Btn>
          </WinBtns>
        </TitleRow>
        <Menus>{["File", "Edit", "Composition", "Layer", "Effect", "Animation", "View", "Window", "Help"].map((m) => <Btn key={m}>{m}</Btn>)}</Menus>
      </TitleBar>

      <ToolBar>
        <Grip />
        {tools.map((g, i) => (
          <React.Fragment key={i}>
            {g.map((n) => <Tool key={n} $on={n === "arrow"} aria-label={n}><Icon n={n} s={16} sw={1.5} /></Tool>)}
            {i < tools.length - 1 && <Sep />}
          </React.Fragment>
        ))}
        <Sep $m={20} />
        <Tool aria-label="Local axis"><Icon n="axes" s={15} /></Tool>
        <Tool $on aria-label="World axis"><Icon n="axes" s={15} /></Tool>
        <Tool aria-label="View axis"><Icon n="axesView" s={14} /></Tool>
        <Sep $m={6} />
        <TickLabel><Tick $s={14} $c="#555" />Snapping</TickLabel>
        <Tool aria-label="Snap edges"><Icon n="snapA" s={13} /></Tool>
        <Tool aria-label="Snap features"><Icon n="dotsBox" s={13} /></Tool>
        <Spaces>
          {["Default", "Standard", "Small Screen", "Libraries"].map((s) => <Btn key={s}>{s}</Btn>)}
          <Btn $c="#555" aria-label="More workspaces"><Icon n="more" s={10} /></Btn>
        </Spaces>
        <Sep $m={6} />
        <Btn aria-label="Workspace settings"><Icon n="settings" s={18} /></Btn>
        <Sep $m={5} />
        <SearchBox $w={195}><Icon n="magL" s={13} /><input aria-label="Search Help" placeholder="Search Help" /></SearchBox>
      </ToolBar>

      <Work>
        <Upper>
          <Panel>
            <Tabs $l={11} $g={38}>
              <Btn>Project</Btn>
              <ActiveTab $u>
                <Btn $c="#b4b4b4" aria-label="Close tab"><Icon n="x" s={9} /></Btn><Chip $c="#b83a40" /><Icon n="lock" s={10} />
                <Btn>Effect Controls <Blue>White Solid 1</Blue></Btn><Icon n="menu" s={9} />
              </ActiveTab>
            </Tabs>
            <Crumb>Comp 1 • White Solid 1</Crumb>
            <Effect name="source"><ChromaProps color="#00ff00" /></Effect>
            <Effect name="output"><ChromaProps color={C.salmon} /></Effect>
            <Effect name="Slider Control"><Prop name="Slider" tri><Link>0.00</Link></Prop></Effect>
          </Panel>

          <Middle>
            <CompPanel>
              <Tabs $l={9}>
                <ActiveTab>
                  <Btn $c="#b4b4b4" aria-label="Close tab"><Icon n="x" s={9} /></Btn><Chip $c="#b0a084" /><Icon n="lock" s={10} />
                  <Btn>Composition <Blue>Comp 1</Blue></Btn><Icon n="menu" s={9} />
                </ActiveTab>
              </Tabs>
              <CompHead><CompTab>Comp 1</CompTab></CompHead>
              <Viewport>
                <Frame>
                  <Handle $side="left" /><Handle $side="right" />
                  <svg width="16" height="16" viewBox="0 0 16 16" fill="none" stroke="currentColor" aria-hidden="true"><circle cx="8" cy="8" r="4.500" /><path d="M8 0v5M8 11v5M0 8h5M11 8h5M6 6l4 4M10 6l-4 4" /></svg>
                </Frame>
              </Viewport>
              <CompFoot>
                <Icon n="layers" s={13} /><Icon n="monitor" s={13} /><Icon n="mask" s={16} />
                <FootSelect $w={70} value="50%" label="Magnification" />
                <Icon n="grid" s={13} /><Tint $c="#24507c" $p={2}><Icon n="path" s={14} /></Tint><TimeBox>00000</TimeBox>
                <Icon n="photo" s={14} /><Icon n="person" s={14} /><Icon n="rgb" s={14} />
                <FootSelect $w={87} value="Full" label="Resolution" />
                <Icon n="safe" s={14} /><Icon n="checker" s={14} />
                <FootSelect $w={104} value="Active Camera" label="3D view" />
                <FootSelect $w={70} value="1 View" label="View layout" />
                <Icon n="par" s={13} /><Gap $w={1} /><Icon n="fast" s={14} /><Gap $w={1} /><Icon n="tl" s={13} />
              </CompFoot>
            </CompPanel>
            <ToolsPanel>
              <Tabs $l={13} $g={10}><Btn>Byjus_AE_Tools-v1</Btn><Icon n="menu" s={9} /></Tabs>
              <ToolsBody>
                <ToolsMain>
                  <CatRow>
                    {["Project", "Timeline", "KeyFrame", "Keying & Shading", "Standardize", "Creators"].map((c, i) => <Cat key={c} $first={i === 0} $on={c === "Standardize"}>{c}</Cat>)}
                    <Author>(Author : manjunath.k@byjus.com)</Author>
                  </CatRow>
                  <ActRow $t={7}>
                    {[["Shape Anchor Point", 121], ["SourceRectAtTime", 114], ["LinearTimeSlider", 105], ["Pos Keys IK", 77], ["Pos Follow Size", 99], ["Layer Anchor Point", 116]].map(([t, w]) => <Act key={t} $w={w}>{t}</Act>)}
                  </ActRow>
                  <ActRow $t={4}><Act $w={115} aria-label="Tool 7" /><Act $w={117} aria-label="Tool 8" /><Act $w={107} aria-label="Tool 9" /></ActRow>
                </ToolsMain>
                <Scroll>
                  <ScrollBtn $c="#a0a0a0" aria-label="Scroll up"><svg width="7" height="4"><path d="M0 4 3.500 0 7 4z" fill="currentColor" /></svg></ScrollBtn>
                  <Thumb />
                  <ScrollBtn $c="#444" aria-label="Scroll down"><svg width="7" height="4"><path d="M0 0h7L3.500 4z" fill="currentColor" /></svg></ScrollBtn>
                </Scroll>
              </ToolsBody>
            </ToolsPanel>
          </Middle>

          <Panel>
            <SideHead $b>Info</SideHead>
            <SideHead $b>Audio</SideHead>
            <SideHead>Effects &amp; Presets<Icon n="menu" s={9} /></SideHead>
            <SideSearch><SearchBox $h={20}><Icon n="magDrop" s={12} w={16} /><input aria-label="Search effects" /></SearchBox></SideSearch>
            <FxList>{presets.map((p) => <FxItem key={p}><Icon n="triR" s={8} /><FxItemText>{p}</FxItemText></FxItem>)}</FxList>
          </Panel>
        </Upper>

        <Time>
          <Tabs $l={9} $g={38}>
            <ActiveTab $u>
              <Btn $c="#b4b4b4" aria-label="Close tab"><Icon n="x" s={9} /></Btn><Chip $c="#b0a27c" /><Btn>Comp 1</Btn><Icon n="menu" s={9} />
            </ActiveTab>
            <Btn>Render Queue</Btn>
          </Tabs>
          <TimeCols>
            <Left>
              <Top>
                <Clock><Frames>00000</Frames>0:00:00:00 (25.00 fps)</Clock>
                <Gap $w={12} />
                <SearchBox $w={495} $h={20}><Icon n="magDrop" s={12} w={16} /><input aria-label="Search layers" /></SearchBox>
                <SwitchRow>
                  <Icon n="flow" s={14} w={16} /><Icon n="draft" s={16} /><Icon n="shyBig" s={15} /><Icon n="film" s={14} /><Icon n="blur" s={14} /><Icon n="graph" s={16} />
                </SwitchRow>
              </Top>
              <Heads>
                <Head $w={68} $g={4}><Icon n="eye" s={11} /><Icon n="speaker" s={11} w={12} /><Icon n="dot" s={10} /><Icon n="lockC" s={11} w={10} /></Head>
                <Head $w={31} $b><Slot $w={24}><Icon n="tag" s={11} w={12} /></Slot></Head>
                <Head $w={33} $b $g={10}><span>#</span><span>.</span></Head>
                <Head $w={253} $b>Source Name</Head>
                <Head $w={136} $b $g={3}>
                  <Icon n="shy" s={12} /><Icon n="sun" s={11} /><Icon n="slash" s={11} /><SmallFx>fx</SmallFx><Icon n="film" s={12} /><Icon n="blur" s={12} /><Icon n="adj" s={12} /><Icon n="cube" s={12} />
                </Head>
                <Head $w={77} $b $g={9}><span>Mode</span><span>.</span></Head>
                <Head $w={89} $g={8}><span>T</span><span>.TrkMat</span></Head>
                <Head $w={117} $b>Parent &amp; Link</Head>
                <Head $w={15} $b />
              </Heads>
              <Clip>
                <Rows>
                  {outline.map((r, i) => (
                    <TRow key={i} $off={r.off} $h={r.h}>
                      <TName>
                        <Indent $w={r.indent || 119}>{r.fx && <Fx>fx</Fx>}</Indent>
                        <Slot $c="#b4b4b4">{r.tri ? <Icon n={r.tri} s={8} /> : <Speck />}</Slot>
                        {r.watch && <Slot $c={r.off ? "#484848" : "#b4b4b4"}><Icon n="watch" s={13} /></Slot>}
                        <TLabel $sel={r.sel}>{r.n}</TLabel>
                      </TName>
                      <TVal $top={r.kind === "expr"} $off={r.off}><RowValue r={r} /></TVal>
                      {r.whip && <Slot $w={12} $c="#a0a0a0"><Icon n="whip" s={12} /></Slot>}
                    </TRow>
                  ))}
                </Rows>
              </Clip>
            </Left>
            <Right>
              <NavBar><Cap /><Cap $end /></NavBar>
              <Ruler><Marks>{marks.map((m) => <Mark key={m}>{m}</Mark>)}</Marks></Ruler>
              <WorkArea><Cap /><Cap $end /></WorkArea>
              <TrackClip>
                <Rows>
                  {outline.map((r, i) => (
                    <Track key={i} $h={r.h} $c={r.key}>
                      {r.kind === "expr" ? <Code aria-label="Expression" readOnly value={"myHsl=rgbToHsl([1,0,0,1]);\nmyHsl[1]=0.5\nhslToRgb([myHsl[0],myHsl[1],myHsl[2],1])"} /> : !r.nokey && <IBeam />}
                    </Track>
                  ))}
                </Rows>
              </TrackClip>
              <Playhead><svg width="12" height="14" viewBox="0 0 12 14" aria-hidden="true"><path d="M0 0h12v6l-5 8H5L0 6z" fill="#2d8ceb" /><path d="M4 5h4M6 5v4" stroke="#123" /></svg></Playhead>
            </Right>
            <Gutter><Icon n="marker" s={14} w={12} /><Icon n="compBtn" s={12} w={14} /></Gutter>
          </TimeCols>
          <Foot>
            <FootSet><Icon n="squares" s={13} /><Icon n="circSq" s={13} /><Tint $c="#a0a0a0"><Icon n="brackets" s={12} /></Tint></FootSet>
            <Tint $c="#a0a0a0"><Icon n="mtn" s={10} /></Tint><Gap $w={2} />
            <Zoom aria-label="Zoom timeline" defaultValue="0" /><Gap $w={2} />
            <Tint $c="#a0a0a0"><Icon n="mtn2" s={11} w={17} /></Tint>
          </Foot>
        </Time>
      </Work>

      <Task>
        {apps.map(([n, icon, st], i) => <TaskBtn key={n} $w={i ? 49 : 50} $on={st === "on"} $open={st === "open"} aria-label={n}>{icon}</TaskBtn>)}
        <Tray>
          <L s={20}><circle cx="12" cy="12" r="11" fill="#fdb833" /><path d="M1 16c2-4 6-1 8-3s8-3 9 1c5 0 5 4 1 4H3c-2 0-2-1-2-2z" fill="#e8cfa6" /></L>
          <span>20°C</span><span>Smoke</span><Gap $w={0} />
          <Icon n="chevUp" s={12} /><Icon n="vol" s={16} />
          <DateBox>14:35<br />10-12-2021</DateBox>
          <Btn aria-label="Notifications"><Icon n="note" s={16} /></Btn>
        </Tray>
      </Task>

      <Watermark><strong>Activate Windows</strong>Go to Settings to activate Windows.</Watermark>

      <Dialog role="dialog" aria-label="Color">
        <DlgTitle>Color<Btn aria-label="Close"><Icon n="thinx" s={10} /></Btn></DlgTitle>
        <DlgBody>
          <Field><Ring /></Field>
          <HueWrap><Icon n="hueL" s={8} w={5} /><Hue /><Icon n="hueR" s={8} w={5} /></HueWrap>
          <NumCol>
            <Pair />
            <Nums $t={8}>
              {numbers.map(([k, v, u], i) => (
                <Num key={k}><Radio name="ch" id={`hsb${i}`} defaultChecked={i === 0} /><NumLabel htmlFor={`hsb${i}`}>{k}:</NumLabel><NumVal $on={i === 1}>{v}</NumVal>{u}</Num>
              ))}
            </Nums>
            <Nums $t={6}>
              {rgb.map(([k, v], i) => (
                <Num key={k}><Radio name="ch" id={`rgb${i}`} /><NumLabel htmlFor={`rgb${i}`}>{k}:</NumLabel><NumVal>{v}</NumVal></Num>
              ))}
            </Nums>
            <Hex>#<input defaultValue="FF8080" /></Hex>
          </NumCol>
          <DlgSide>
            <Pill $main>OK</Pill>
            <Pill>Cancel</Pill>
            <PickBtn aria-label="Eyedropper"><Icon n="dropper" s={15} /></PickBtn>
            <TickLabel><Check defaultChecked />Preview</TickLabel>
          </DlgSide>
        </DlgBody>
      </Dialog>
    </Shell>
  );
}
